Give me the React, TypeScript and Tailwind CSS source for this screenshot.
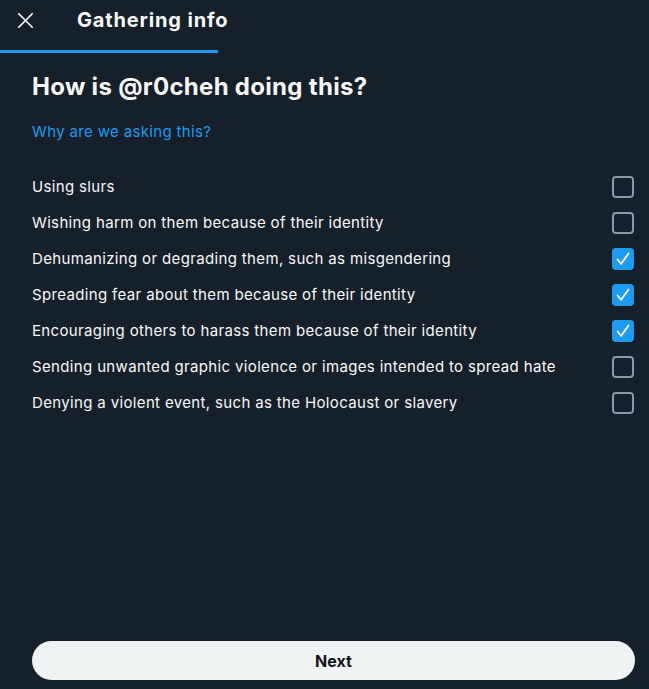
import { X } from 'lucide-react';

const options = [
  { label: 'Using slurs', checked: false },
  { label: 'Wishing harm on them because of their identity', checked: false },
  { label: 'Dehumanizing or degrading them, such as misgendering', checked: true },
  { label: 'Spreading fear about them because of their identity', checked: true },
  { label: 'Encouraging others to harass them because of their identity', checked: true },
  { label: 'Sending unwanted graphic violence or images intended to spread hate', checked: false },
  { label: 'Denying a violent event, such as the Holocaust or slavery', checked: false },
];

export default function App() {
  return (
    <div className="w-[649px] h-[689px] bg-[#15202b] flex flex-col text-[#f7f9f9] font-['Inter',sans-serif] overflow-hidden">
      <div className="h-[53px] flex items-start">
        <div className="w-[218px] h-[53px] flex items-start border-b-[3px] border-[#1d9bf0]">
          <button className="w-[50px] h-[40px] shrink-0 flex items-center justify-center text-[#f7f9f9]">
            <X size={27} strokeWidth={1.5} />
          </button>
          <h2 className="ml-[27px] mt-[6px] shrink-0 text-[20px] font-bold leading-[28px] tracking-[0.85px] whitespace-nowrap">Gathering info</h2>
        </div>
      </div>
      <div className="pl-[32px] pr-[14px] pt-[20px] flex-1 flex flex-col">
        <h1 className="text-[24px] font-bold leading-[28px] tracking-[0.3px]">How is @r0cheh doing this?</h1>
        <a className="mt-[21px] text-[15px] leading-[20px] tracking-[0.35px] text-[#1d9bf0]">Why are we asking this?</a>
        <div className="mt-[27px] flex flex-col">
          {options.map(o => (
            <div key={o.label} className="h-[36px] flex items-center justify-between">
              <span className="text-[15px] leading-[20px] tracking-[0.35px]">{o.label}</span>
              <span className={`w-[22px] h-[22px] rounded-[4px] mr-[1px] flex items-center justify-center ${o.checked ? 'bg-[#1d9bf0]' : 'border-2 border-[#8b98a5]'}`}>
                {o.checked && (
                  <svg width="22" height="22" viewBox="0 0 22 22" fill="none">
                    <path d="M5.5 11.5 L9.2 15.8 L16.5 5.5" stroke="white" strokeWidth="1.8" strokeLinecap="round" strokeLinejoin="round" />
                  </svg>
                )}
              </span>
            </div>
          ))}
        </div>
      </div>
      <div className="pl-[32px] pr-[14px] pb-[9px]">
        <button className="w-full h-[39px] rounded-full bg-[#eff3f4] text-[#0f1419] text-[16px] font-bold">Next</button>
      </div>
    </div>
  );
}
